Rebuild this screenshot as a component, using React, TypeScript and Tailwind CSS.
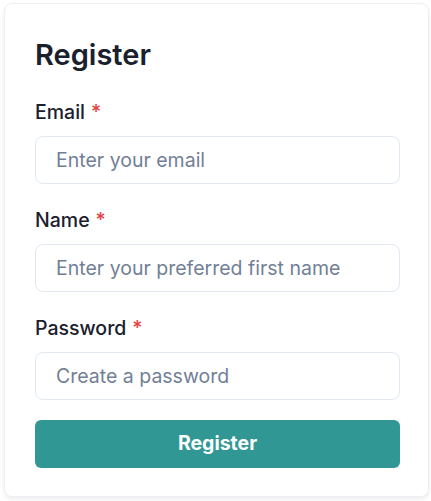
export default function App() {
  const fields = [
    { label: 'Email', type: 'email', placeholder: 'Enter your email' },
    { label: 'Name', type: 'text', placeholder: 'Enter your preferred first name' },
    { label: 'Password', type: 'password', placeholder: 'Create a password' },
  ];

  return (
    <div className="min-h-screen bg-white pt-[3px] pl-[4px] font-['Inter',sans-serif]">
      <div className="w-[425px] rounded-lg border border-[#edf0f4] bg-white pl-[30px] pr-[28px] pt-[34px] pb-[28px] shadow-[0_2px_4px_rgba(0,0,0,0.08)]">
        <h1 className="text-[29px] leading-[34px] font-semibold text-[#1a202c]">Register</h1>

        <form className="mt-[26px]" onSubmit={(e) => e.preventDefault()}>
          {fields.map((f, i) => (
            <div key={f.label} className={i > 0 ? 'mt-[22px]' : ''}>
              <label className="block text-[19.5px] leading-7 font-medium text-[#1a202c] mb-[10px]">
                {f.label}
                <span className="ml-1.5 text-[#e53e3e]">*</span>
              </label>
              <input
                type={f.type}
                placeholder={f.placeholder}
                className="block h-12 w-full rounded-lg border border-[#e2e8f0] bg-white px-5 text-[19.5px] text-[#1a202c] placeholder:text-[#718096] outline-none"
              />
            </div>
          ))}

          <button
            type="submit"
            className="mt-5 h-12 w-full rounded-md bg-[#319795] text-[19.5px] font-bold text-white"
          >
            Register
          </button>
        </form>
      </div>
    </div>
  );
}
